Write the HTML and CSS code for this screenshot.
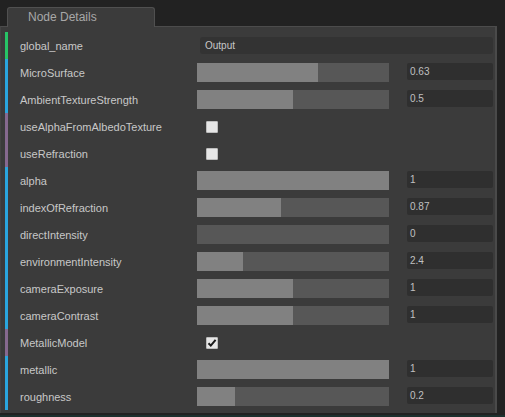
FILE: index.html
```html
<!DOCTYPE html>
<html>
<head>
<meta charset="utf-8">
<link rel="stylesheet" href="styles.css">
</head>
<body>
<div class="app">
  <div class="tabs"><div class="tab">Node Details</div></div>
  <div class="panel">
    <div class="row"><span class="bar green"></span><span class="label">global_name</span><div class="text-input">Output</div></div>
    <div class="row"><span class="bar blue"></span><span class="label">MicroSurface</span><div class="slider"><div class="fill" style="width:63%"></div></div><div class="value">0.63</div></div>
    <div class="row"><span class="bar blue"></span><span class="label">AmbientTextureStrength</span><div class="slider"><div class="fill" style="width:50%"></div></div><div class="value">0.5</div></div>
    <div class="row"><span class="bar purple"></span><span class="label">useAlphaFromAlbedoTexture</span><span class="check"></span></div>
    <div class="row"><span class="bar purple"></span><span class="label">useRefraction</span><span class="check"></span></div>
    <div class="row"><span class="bar blue"></span><span class="label">alpha</span><div class="slider"><div class="fill" style="width:100%"></div></div><div class="value">1</div></div>
    <div class="row"><span class="bar blue"></span><span class="label">indexOfRefraction</span><div class="slider"><div class="fill" style="width:44%"></div></div><div class="value">0.87</div></div>
    <div class="row"><span class="bar blue"></span><span class="label">directIntensity</span><div class="slider"><div class="fill" style="width:0%"></div></div><div class="value">0</div></div>
    <div class="row"><span class="bar blue"></span><span class="label">environmentIntensity</span><div class="slider"><div class="fill" style="width:24%"></div></div><div class="value">2.4</div></div>
    <div class="row"><span class="bar blue"></span><span class="label">cameraExposure</span><div class="slider"><div class="fill" style="width:50%"></div></div><div class="value">1</div></div>
    <div class="row"><span class="bar blue"></span><span class="label">cameraContrast</span><div class="slider"><div class="fill" style="width:50%"></div></div><div class="value">1</div></div>
    <div class="row"><span class="bar purple"></span><span class="label">MetallicModel</span><span class="check checked"><svg width="10" height="10" viewBox="0 0 10 10"><path d="M1.5 5.2 L3.8 7.6 L8.6 1.8" fill="none" stroke="#1a1a1a" stroke-width="2"/></svg></span></div>
    <div class="row"><span class="bar blue"></span><span class="label">metallic</span><div class="slider"><div class="fill" style="width:100%"></div></div><div class="value">1</div></div>
    <div class="row"><span class="bar blue"></span><span class="label">roughness</span><div class="slider"><div class="fill" style="width:20%"></div></div><div class="value">0.2</div></div>
  </div>
  <div class="bottom"></div>
</div>
</body>
</html>
```
FILE: styles.css
```css
html, body {
  margin: 0;
  padding: 0;
  background: #222222;
  width: 505px;
  height: 417px;
  overflow: hidden;
  font-family: "Liberation Sans", Arial, sans-serif;
}
.app {
  display: flex;
  flex-direction: column;
  height: 417px;
}
.tabs {
  height: 27px;
  display: flex;
  align-items: flex-end;
  padding-left: 7px;
  box-sizing: border-box;
  position: relative;
  z-index: 2;
  margin-bottom: -1px;
}
.tab {
  width: 148px;
  height: 20px;
  box-sizing: border-box;
  border: 1px solid #505050;
  border-bottom: none;
  border-radius: 3px 3px 0 0;
  background: #3b3b3b;
  color: #a8a8a8;
  font-size: 12px;
  line-height: 19px;
  padding-left: 20px;
}
.panel {
  width: 497px;
  box-sizing: border-box;
  background: #3b3b3b;
  border-top: 1px solid #4c4c4c;
  border-right: 2px solid #4a4a4a;
  border-left: 1px solid #444;
  padding-top: 5px;
  padding-bottom: 3px;
}
.row {
  height: 27px;
  display: flex;
  align-items: center;
  padding-left: 4px;
  color: #c8c8c8;
  font-size: 11px;
}
.bar {
  width: 3px;
  height: 27px;
  flex: none;
}
.green { background: #27c466; }
.blue { background: #2aa6de; }
.purple { background: #86698f; }
.label {
  width: 189px;
  padding-left: 12px;
  box-sizing: border-box;
  flex: none;
  white-space: nowrap;
}
.text-input {
  margin-left: 3px;
  width: 293px;
  height: 17px;
  background: #333333;
  border-radius: 3px;
  color: #c8c8c8;
  font-size: 10px;
  line-height: 17px;
  padding-left: 5px;
  box-sizing: border-box;
}
.slider {
  width: 192px;
  height: 19px;
  background: #575757;
  flex: none;
  display: flex;
}
.fill {
  height: 100%;
  background: #818181;
}
.value {
  margin-left: 18px;
  width: 86px;
  height: 17px;
  margin-top: -2px;
  background: #2f2f2f;
  border-radius: 2px;
  color: #c0c0c0;
  font-size: 10px;
  line-height: 17px;
  padding-left: 3px;
  box-sizing: border-box;
}
.check {
  margin-left: 9px;
  width: 12px;
  height: 12px;
  background: #e6e6e6;
  border: 1px solid #bdbdbd;
  box-sizing: border-box;
  border-radius: 1px;
  display: flex;
  align-items: center;
  justify-content: center;
}
.bottom {
  flex: 1;
  background: #1d302e;
  border-top: 2px solid #222;
}
```
